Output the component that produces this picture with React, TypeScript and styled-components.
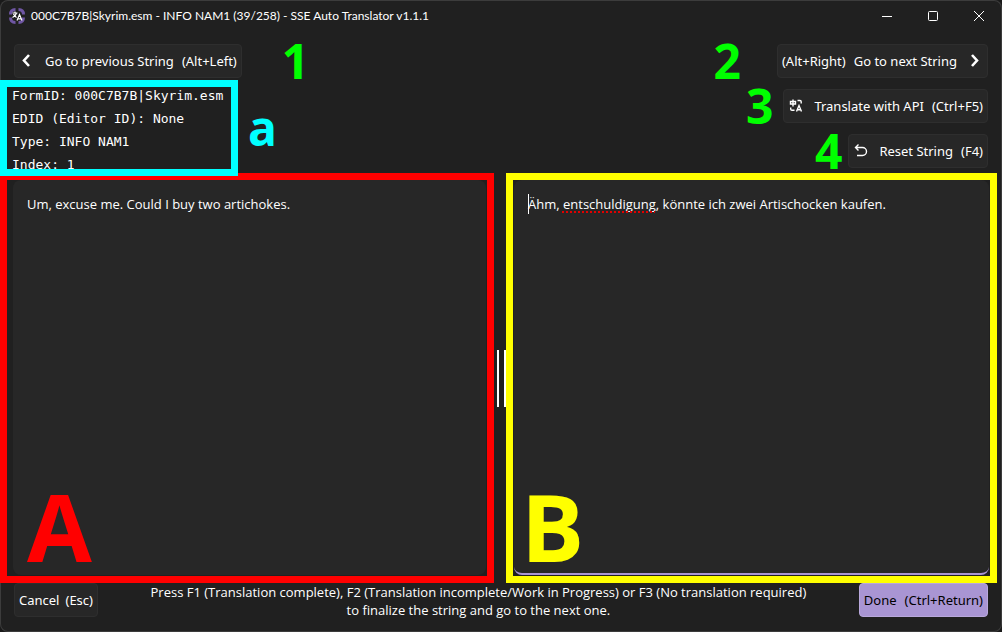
import React from "react";
import styled, { createGlobalStyle } from "styled-components";

const GlobalStyle = createGlobalStyle`
  * { box-sizing: border-box; }
  html, body, #root { height: 100%; margin: 0; }
  body {
    background: #1a1a1a;
    color: #fff;
    font: 13px/20px "Open Sans", "Noto Sans", sans-serif;
    overflow: hidden;
  }
`;

const Window = styled.div`
  display: flex;
  flex-direction: column;
  height: 100%;
  background: #202020;
  box-shadow: inset 0 0 0 1px #3c3c3c;
  border-radius: 8px;
  overflow: hidden;
`;

const TitleBar = styled.header`
  display: flex;
  align-items: center;
  gap: 6px;
  height: 31px;
  padding-left: 9px;
  flex: none;
`;

const Title = styled.h1`
  flex: 1;
  margin: 0;
  font-family: Lato, "Open Sans", sans-serif;
  font-size: 12px;
  line-height: 16px;
  font-weight: 400;
`;

const CaptionButton = styled.button`
  display: grid;
  place-items: center;
  width: 46px;
  height: 30px;
  padding: 0;
  border: 0;
  background: none;
  color: #fff;
`;

const Header = styled.section`
  display: flex;
  justify-content: space-between;
  flex: none;
  height: 142px;
  padding: 13px 14px 0 0;
`;

const InfoSide = styled.div`
  display: flex;
  flex-direction: column;
  align-items: flex-start;
  gap: 2px;
`;

const ActionSide = styled.div`
  display: flex;
  flex-direction: column;
  align-items: flex-end;
  gap: 11px;
`;

const Row = styled.div<{ $gap: number; $indent?: number }>`
  display: flex;
  align-items: center;
  gap: ${(p) => p.$gap}px;
  padding-left: ${(p) => p.$indent ?? 0}px;
`;

const Button = styled.button<{ $primary?: boolean; $wide?: boolean }>`
  display: flex;
  align-items: center;
  gap: ${(p) => (p.$wide ? 8 : 6)}px;
  height: 34px;
  padding: 0 4px;
  border: 1px solid ${(p) => (p.$primary ? "#b9a8dc" : "#2e2e2e")};
  border-radius: 4px;
  background: ${(p) => (p.$primary ? "#a995d3" : "#272727")};
  color: ${(p) => (p.$primary ? "#000" : "#fff")};
  font: 13px/20px "Noto Sans", "Open Sans", sans-serif;
  white-space: nowrap;
`;

const IconSlot = styled.span<{ $end?: boolean }>`
  display: grid;
  place-items: center;
  width: 16px;
  margin: ${(p) => (p.$end ? "0 0 0 2px" : "0 2px 0 0")};
`;

const Mark = styled.span<{ $color: string }>`
  color: ${(p) => p.$color};
  font-size: 48px;
  line-height: 34px;
  font-weight: 700;
`;

const InfoBox = styled.div`
  position: relative;
  z-index: 1;
  width: 238px;
  height: 96px;
  padding: 0 5px;
  border: 7px solid #0ff;
  overflow: hidden;
`;

const InfoText = styled.pre`
  margin: -3px 0 0;
  font: 13px/23px "DejaVu Sans Mono", monospace;
`;

const Editors = styled.main`
  display: grid;
  grid-template-columns: minmax(0, 494fr) 12px minmax(0, 491fr);
  grid-template-rows: minmax(0, 1fr);
  flex: 1;
  min-height: 0;
  padding-right: 5px;
`;

const Frame = styled.section<{ $color: string; $inset: number }>`
  position: relative;
  display: flex;
  border: 7px solid ${(p) => p.$color};
  padding: 0 1px 1px ${(p) => p.$inset}px;
`;

const editorText = `
  padding: 14px;
  font: 13px/20px "Open Sans", "Noto Sans", sans-serif;
  white-space: pre-wrap;
`;

const TextBox = styled.textarea<{ $active?: boolean }>`
  ${editorText}
  flex: 1;
  min-width: 0;
  border: 0;
  border-bottom: ${(p) => (p.$active ? "2px solid #a995d3" : "0")};
  border-radius: 8px;
  background: #272727;
  color: #fff;
  resize: none;
  outline: none;
`;

const SpellLayer = styled.div`
  ${editorText}
  position: absolute;
  inset: 0 1px;
  color: transparent;
  pointer-events: none;
  &::before {
    content: "";
    float: left;
    width: 1px;
    height: 20px;
    margin-right: -1px;
    background: #fff;
  }
`;

const Misspelled = styled.span`
  text-decoration: underline dotted #e00000 2px;
  text-decoration-skip-ink: none;
  text-underline-offset: 2px;
`;

const BigMark = styled.span<{ $color: string; $left: number }>`
  position: absolute;
  left: ${(p) => p.$left}px;
  bottom: 3px;
  color: ${(p) => p.$color};
  font-size: 94px;
  line-height: 94px;
  font-weight: 700;
  pointer-events: none;
`;

const Splitter = styled.div`
  display: flex;
  align-items: center;
  justify-content: flex-end;
  gap: 5px;
`;

const Grip = styled.span`
  width: 2px;
  height: 57px;
  background: #fff;
`;

const Footer = styled.footer`
  display: flex;
  align-items: flex-start;
  flex: none;
  height: 49px;
  padding: 0 14px;
`;

const Hint = styled.p`
  flex: 1;
  margin: 0;
  line-height: 18px;
  text-align: center;
`;

const AppLogo = () => (
  <svg width="16" height="16" viewBox="0 0 16 16" fill="none" aria-hidden="true">
    <path d="M1.500 6.500Q1.500 1.500 6.500 1.500M9.500 1.500Q14.500 1.500 14.500 6.500M14.500 9.500Q14.500 14.500 9.500 14.500M6.500 14.500Q1.500 14.500 1.500 9.500" stroke="#6f56a3" strokeWidth="3" />
    <path d="M3.500 5h5M6 3.500V5M7.500 5c-.5 2-2 3.500-4 4.500M4.500 6c.7 1.500 1.500 2.500 3 3.500M8 12.500l2.500-6 2.500 6M9 10.800h3" stroke="#fff" strokeWidth="1.200" />
  </svg>
);

const Chevron = ({ next }: { next?: boolean }) => (
  <svg width="14" height="14" viewBox="0 0 14 14" fill="none" aria-hidden="true">
    <path d={next ? "M4 1l5 5.500L4 12" : "M9 1L4 6.500 9 12"} stroke="#fff" strokeWidth="2.600" />
  </svg>
);

const TranslateIcon = () => (
  <svg width="14" height="14" viewBox="0 0 14 14" fill="none" stroke="#fff" aria-hidden="true">
    <path d="M1.500 2.500h5v2.500h-5zM4 .5v7M8.500 1.500H11q1.200 0 1.200 1.200V4.500M1.700 8.500V10q0 1.300 1.300 1.300h2.500M7.500 12.500l2.500-6 2.500 6M8.300 10.800h3.400" strokeWidth="1.400" />
  </svg>
);

const UndoIcon = () => (
  <svg width="14" height="14" viewBox="0 0 14 14" fill="none" stroke="#fff" aria-hidden="true">
    <path d="M4.500 .5L1.500 3.500l3 3M1.500 3.500h7a4 4 0 0 1 0 8H3" strokeWidth="1.400" />
  </svg>
);

const INFO = `FormID: 000C7B7B|Skyrim.esm
EDID (Editor ID): None
Type: INFO NAM1
Index: 1`;

export default function App() {
  return (
    <>
      <GlobalStyle />
      <Window>
        <TitleBar>
          <AppLogo />
          <Title>000C7B7B|Skyrim.esm - INFO NAM1 (39/258) - SSE Auto Translator v1.1.1</Title>
          <Row $gap={0}>
            <CaptionButton aria-label="Minimize">
              <svg width="10" height="10"><path d="M0 5.500h10" stroke="#fff" /></svg>
            </CaptionButton>
            <CaptionButton aria-label="Maximize">
              <svg width="10" height="10"><rect x=".5" y=".5" width="9" height="9" rx="1" stroke="#fff" fill="none" /></svg>
            </CaptionButton>
            <CaptionButton aria-label="Close">
              <svg width="10" height="10"><path d="M0 0l10 10M10 0L0 10" stroke="#fff" /></svg>
            </CaptionButton>
          </Row>
        </TitleBar>
        <Header>
          <InfoSide>
            <Row $gap={40} $indent={14}>
              <Button $wide><IconSlot><Chevron /></IconSlot><span>Go to previous String</span><span>(Alt+Left)</span></Button>
              <Mark $color="#0f0">1</Mark>
            </Row>
            <Row $gap={10}>
              <InfoBox><InfoText>{INFO}</InfoText></InfoBox>
              <Mark $color="#0ff">a</Mark>
            </Row>
          </InfoSide>
          <ActionSide>
            <Row $gap={36}>
              <Mark $color="#0f0">2</Mark>
              <Button $wide><span>(Alt+Right)</span><span>Go to next String</span><IconSlot $end><Chevron next /></IconSlot></Button>
            </Row>
            <Row $gap={10}>
              <Mark $color="#0f0">3</Mark>
              <Button $wide><IconSlot><TranslateIcon /></IconSlot><span>Translate with API</span><span>(Ctrl+F5)</span></Button>
            </Row>
            <Row $gap={6}>
              <Mark $color="#0f0">4</Mark>
              <Button $wide><IconSlot><UndoIcon /></IconSlot><span>Reset String</span><span>(F4)</span></Button>
            </Row>
          </ActionSide>
        </Header>
        <Editors>
          <Frame $color="#f00" $inset={6}>
            <TextBox readOnly aria-label="Original" defaultValue="Um, excuse me. Could I buy two artichokes." />
            <BigMark $color="#f00" $left={20}>A</BigMark>
          </Frame>
          <Splitter><Grip /><Grip /></Splitter>
          <Frame $color="#ff0" $inset={1}>
            <TextBox $active spellCheck={false} aria-label="Translation" defaultValue="Ähm, entschuldigung, könnte ich zwei Artischocken kaufen." />
            <SpellLayer aria-hidden="true">Ähm, <Misspelled>entschuldigung</Misspelled></SpellLayer>
            <BigMark $color="#ff0" $left={8}>B</BigMark>
          </Frame>
        </Editors>
        <Footer>
          <Button>Cancel<span>(Esc)</span></Button>
          <Hint>
            Press F1 (Translation complete), F2 (Translation incomplete/Work in Progress) or F3 (No translation required)
            <br />
            to finalize the string and go to the next one.
          </Hint>
          <Button $primary $wide>Done<span>(Ctrl+Return)</span></Button>
        </Footer>
      </Window>
    </>
  );
}
